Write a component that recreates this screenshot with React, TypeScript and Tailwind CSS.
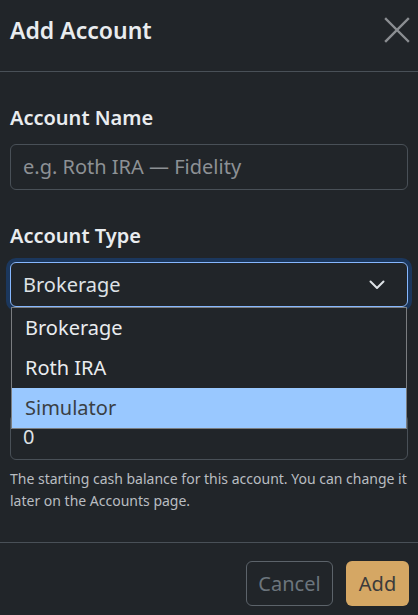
import React from "react";

export default function App() {
  return (
    <div className="w-[418px] h-[615px] bg-[#212529] text-[#dee2e6] font-['Noto_Sans','Liberation_Sans',sans-serif] flex flex-col overflow-hidden">
      {/* Header */}
      <div className="h-[72px] flex items-center justify-between pl-[10px] pr-[8px] border-b border-[#495057] shrink-0">
        <h5 className="text-[23px] font-semibold text-[#e9ecef] leading-none -mt-[10px]">Add Account</h5>
        <button className="w-[26px] h-[26px] flex items-center justify-center -mt-[12px]">
          <svg width="26" height="26" viewBox="0 0 26 26" fill="none">
            <path d="M2 2 L24 24 M24 2 L2 24" stroke="#8b8e92" strokeWidth="2.4" strokeLinecap="square" />
          </svg>
        </button>
      </div>

      {/* Body */}
      <div className="flex-1 px-[10px] pt-[32px] flex flex-col">
        <label className="text-[20px] font-semibold leading-[27px] text-[#e9ecef] mb-[13px]">Account Name</label>
        <div className="h-[46px] rounded-[6px] border border-[#495057] flex items-center px-[12px] text-[20px] text-[#8d9195]">
          e.g. Roth IRA — Fidelity
        </div>

        <label className="text-[20px] font-semibold leading-[27px] text-[#e9ecef] mt-[32px] mb-[13px]">Account Type</label>
        <div className="relative">
          <div className="h-[45px] rounded-[6px] border border-[#86b7fe] shadow-[0_0_0_4px_rgba(13,110,253,0.25)] flex items-center justify-between pl-[12px] pr-[22px] text-[20px] text-[#dee2e6]">
            <span>Brokerage</span>
            <svg width="16" height="10" viewBox="0 0 16 10" fill="none">
              <path d="M1.5 1.5 L8 8 L14.5 1.5" stroke="#dee2e6" strokeWidth="2" strokeLinecap="round" strokeLinejoin="round" />
            </svg>
          </div>
          <div className="absolute left-[1px] right-[1px] top-full z-10 bg-[#212529] border border-[#7a7d80] flex flex-col">
            <div className="h-[40px] flex items-center px-[13px] text-[20px] text-[#e9ecef]">Brokerage</div>
            <div className="h-[40px] flex items-center px-[13px] text-[20px] text-[#e9ecef]">Roth IRA</div>
            <div className="h-[40px] flex items-center px-[13px] text-[20px] text-[#3a3f44] bg-[#99c8ff]">Simulator</div>
          </div>
        </div>

        <div className="h-[107px] shrink-0" />
        <div className="h-[46px] rounded-[6px] border border-[#495057] flex items-center px-[12px] text-[20px] text-[#dee2e6]">
          <span>0</span>
        </div>
        <p className="mt-[8px] text-[14px] leading-[22px] text-[#b9bdc1]">
          The starting cash balance for this account. You can change it later on the Accounts page.
        </p>
      </div>

      {/* Footer */}
      <div className="h-[73px] border-t border-[#495057] shrink-0 flex items-start justify-end gap-[13px] pt-[18px] pr-[9px]">
        <button className="h-[45px] w-[87px] rounded-[6px] border border-[#5c636a] text-[20px] text-[#6c757d] flex items-center justify-center">
          Cancel
        </button>
        <button className="h-[45px] w-[63px] rounded-[6px] bg-[#d5a764] text-[20px] text-[#3b3b3b] flex items-center justify-center">
          Add
        </button>
      </div>
    </div>
  );
}
